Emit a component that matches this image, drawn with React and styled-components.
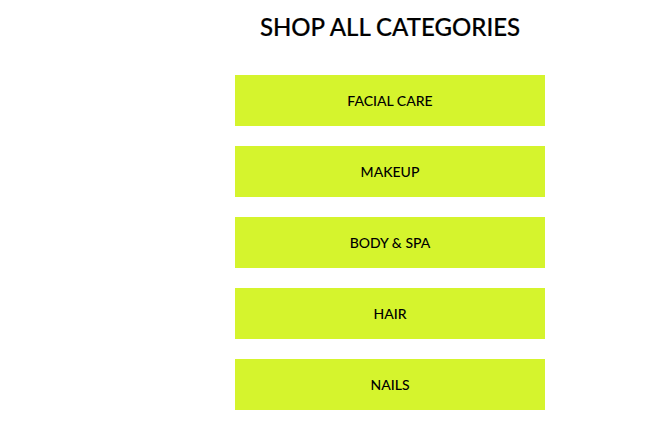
import styled, { createGlobalStyle } from "styled-components";

const GlobalStyle = createGlobalStyle`
  body {
    margin: 0;
    background: #ffffff;
    font-family: Lato, "Liberation Sans", sans-serif;
  }
`;

const Page = styled.div`
  display: grid;
  grid-template-columns: 235px 310px;
  padding-top: 12px;
`;

const Section = styled.section`
  grid-column: 2;
  display: flex;
  flex-direction: column;
  align-items: stretch;
`;

const Title = styled.h2`
  margin: 0 0 33px;
  font-size: 24px;
  line-height: 30px;
  font-weight: 500;
  color: #000;
  text-align: center;
  white-space: nowrap;
  -webkit-text-stroke: 0.2px #000;
`;

const List = styled.div`
  display: flex;
  flex-direction: column;
  gap: 20px;
`;

const CategoryButton = styled.a`
  display: flex;
  align-items: center;
  justify-content: center;
  height: 51px;
  background: #d5f42d;
  color: #000;
  font-size: 14px;
  font-weight: 500;
  text-decoration: none;
`;

const categories = ["FACIAL CARE", "MAKEUP", "BODY & SPA", "HAIR", "NAILS"];

const App = () => {
  return (
    <>
      <GlobalStyle />
      <Page>
        <Section>
          <Title>SHOP ALL CATEGORIES</Title>
          <List>
            {categories.map((c) => (
              <CategoryButton key={c} href="#">
                {c}
              </CategoryButton>
            ))}
          </List>
        </Section>
      </Page>
    </>
  );
};

export default App;
